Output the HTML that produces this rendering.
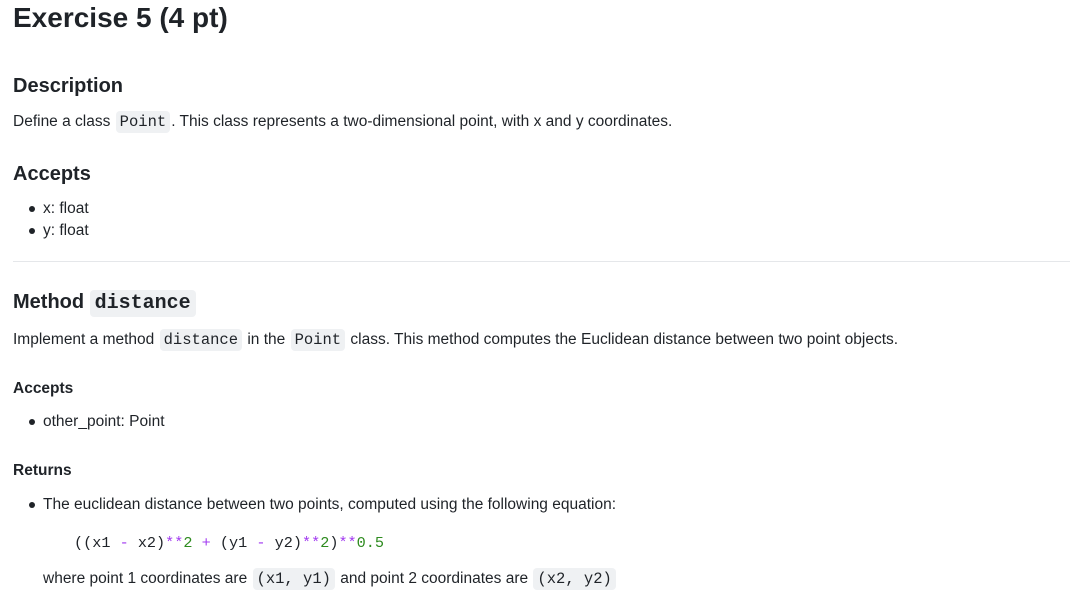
<!DOCTYPE html>
<html><head><meta charset="utf-8"><style>
body{margin:0;width:1073px;height:590px;overflow:hidden;background:#fff;font-family:"Liberation Sans",Arial,sans-serif;color:#1f2328;font-size:15.5px}
.a{position:absolute;left:13px;white-space:nowrap;line-height:24px}
code{font-family:"Liberation Mono",monospace;font-size:15.5px;background:#eff1f3;padding:2px 4px;border-radius:4px;margin:0 1px}
.b::before{content:"";position:absolute;left:-14px;top:9px;width:6px;height:6px;border-radius:50%;background:#1f2328}
.p{color:#a23bf0}.g{color:#2e8b1f}
</style></head><body>
<div class="a" style="top:1px;font-size:28px;font-weight:bold;line-height:34px">Exercise 5 (4 pt)</div>
<div class="a" style="top:74px;font-size:20px;font-weight:bold">Description</div>
<div class="a" style="top:110px">Define a class <code>Point</code>. This class represents a two-dimensional point, with x and y coordinates.</div>
<div class="a" style="top:162px;font-size:20px;font-weight:bold">Accepts</div>
<div class="a b" style="left:43px;top:197px">x: float</div>
<div class="a b" style="left:43px;top:219px">y: float</div>
<div style="position:absolute;left:13px;top:261px;width:1057px;height:1px;background:#e5e7ea"></div>
<div class="a" style="top:288px;font-size:20px;font-weight:bold;line-height:28px">Method <code style="font-size:20px;font-weight:bold;padding:2px 5px;margin:0">distance</code></div>
<div class="a" style="top:328px">Implement a method <code>distance</code> in the <code>Point</code> class. This method computes the Euclidean distance between two point objects.</div>
<div class="a" style="top:377px;font-weight:bold">Accepts</div>
<div class="a b" style="left:43px;top:410px">other_point: Point</div>
<div class="a" style="top:459px;font-weight:bold">Returns</div>
<div class="a b" style="left:43px;top:493px">The euclidean distance between two points, computed using the following equation:</div>
<div class="a" style="left:74px;top:531px;font-family:'Liberation Mono',monospace;font-size:15.2px">((x1 <span class="p">-</span> x2)<span class="p">**</span><span class="g">2</span> <span class="p">+</span> (y1 <span class="p">-</span> y2)<span class="p">**</span><span class="g">2</span>)<span class="p">**</span><span class="g">0.5</span></div>
<div class="a" style="left:43px;top:567px">where point 1 coordinates are <code>(x1, y1)</code> and point 2 coordinates are <code>(x2, y2)</code></div>
</body></html>
